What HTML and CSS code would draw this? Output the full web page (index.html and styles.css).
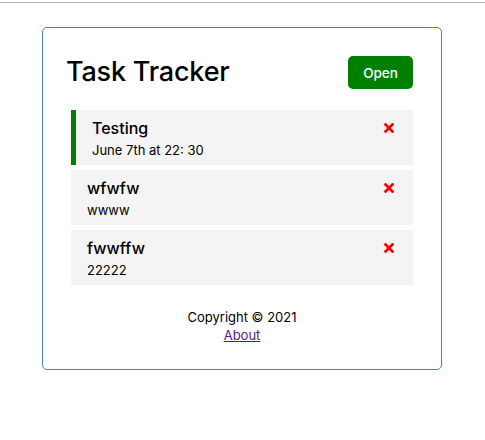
FILE: index.html
```html
<!DOCTYPE html>
<html lang="en">
<head>
<meta charset="utf-8">
<title>Task Tracker</title>
<link rel="stylesheet" href="styles.css">
</head>
<body>
<div class="topline"></div>
<div class="container">
  <header class="header">
    <h1 class="title">Task Tracker</h1>
    <button class="btn">Open</button>
  </header>
  <div class="tasks">
    <div class="task reminder">
      <h3 class="task-title">Testing
        <svg class="del" viewBox="0 80 352 352" aria-hidden="true"><path d="M242.72 256l100.07-100.07c12.28-12.28 12.28-32.19 0-44.48l-22.24-22.240c-12.28-12.28-32.19-12.28-44.48 0L176 189.28 75.93 89.21c-12.28-12.28-32.19-12.28-44.48 0L9.21 111.45c-12.28 12.28-12.28 32.19 0 44.48L109.28 256 9.21 356.07c-12.28 12.28-12.28 32.19 0 44.48l22.24 22.24c12.28 12.28 32.2 12.28 44.48 0L176 322.72l100.07 100.07c12.28 12.28 32.2 12.28 44.48 0l22.24-22.24c12.28-12.28 12.28-32.19 0-44.48L242.72 256z"/></svg>
      </h3>
      <p class="task-day">June 7th at 22: 30</p>
    </div>
    <div class="task">
      <h3 class="task-title">wfwfw
        <svg class="del" viewBox="0 80 352 352" aria-hidden="true"><path d="M242.72 256l100.07-100.07c12.28-12.28 12.28-32.19 0-44.48l-22.24-22.24c-12.28-12.28-32.19-12.28-44.48 0L176 189.28 75.93 89.21c-12.28-12.28-32.19-12.28-44.48 0L9.21 111.45c-12.28 12.28-12.28 32.19 0 44.48L109.28 256 9.21 356.07c-12.28 12.28-12.28 32.19 0 44.48l22.24 22.24c12.28 12.28 32.2 12.28 44.48 0L176 322.72l100.07 100.07c12.28 12.28 32.2 12.28 44.48 0l22.24-22.24c12.28-12.28 12.28-32.19 0-44.48L242.72 256z"/></svg>
      </h3>
      <p class="task-day">wwww</p>
    </div>
    <div class="task">
      <h3 class="task-title">fwwffw
        <svg class="del" viewBox="0 80 352 352" aria-hidden="true"><path d="M242.72 256l100.07-100.07c12.28-12.28 12.28-32.19 0-44.48l-22.24-22.24c-12.28-12.28-32.19-12.28-44.48 0L176 189.28 75.93 89.21c-12.28-12.28-32.19-12.28-44.48 0L9.21 111.45c-12.28 12.28-12.28 32.19 0 44.48L109.28 256 9.21 356.07c-12.28 12.28-12.28 32.19 0 44.48l22.24 22.24c12.28 12.28 32.2 12.28 44.48 0L176 322.72l100.07 100.07c12.28 12.28 32.2 12.28 44.48 0l22.24-22.24c12.28-12.28 12.28-32.19 0-44.48L242.72 256z"/></svg>
      </h3>
      <p class="task-day">22222</p>
    </div>
  </div>
  <footer class="footer">
    <p>Copyright &copy; 2021</p>
    <a class="about" href="#about">About</a>
  </footer>
</div>
</body>
</html>
```
FILE: styles.css
```css
* {
  box-sizing: border-box;
  margin: 0;
  padding: 0;
}

body {
  margin: 0;
  padding-right: 1px;
  font-family: "Inter", "DejaVu Sans", sans-serif;
  color: #000;
  background: #fff;
}

.topline {
  height: 1px;
  margin-top: 2px;
  margin-right: -1px;
  background: #b4b4b4;
}

.container {
  width: 400px;
  margin: 24px auto 0;
  border: 1px solid #4682b4;
  border-radius: 5px;
  padding: 23px 23px 25px;
}

.header {
  display: flex;
  justify-content: space-between;
  align-items: center;
  margin-bottom: 16px;
}

.title {
  font-size: 27px;
  font-weight: 500;
  letter-spacing: -0.2px;
  line-height: 1.2;
}

.btn {
  display: inline-block;
  width: 65px;
  height: 33px;
  margin: 5px;
  border: none;
  border-radius: 5px;
  background: #008000;
  color: #fff;
  font-family: inherit;
  font-size: 13.5px;
  font-weight: 500;
  cursor: pointer;
}

.task {
  background: #f4f4f4;
  margin: 5px;
  padding: 6px 19px 4px 16px;
}

.task.reminder {
  border-left: 5px solid #008000;
}

.task-title {
  display: flex;
  justify-content: space-between;
  align-items: center;
  font-size: 16px;
  font-weight: 500;
  line-height: 24px;
}

.del {
  width: 10px;
  height: 10px;
  fill: #ff0000;
}

.task-day {
  font-size: 13px;
  line-height: 21px;
}

.footer {
  margin-top: 23px;
  text-align: center;
  font-size: 13px;
  line-height: 18px;
}

.about {
  color: #551a8b;
}
```
